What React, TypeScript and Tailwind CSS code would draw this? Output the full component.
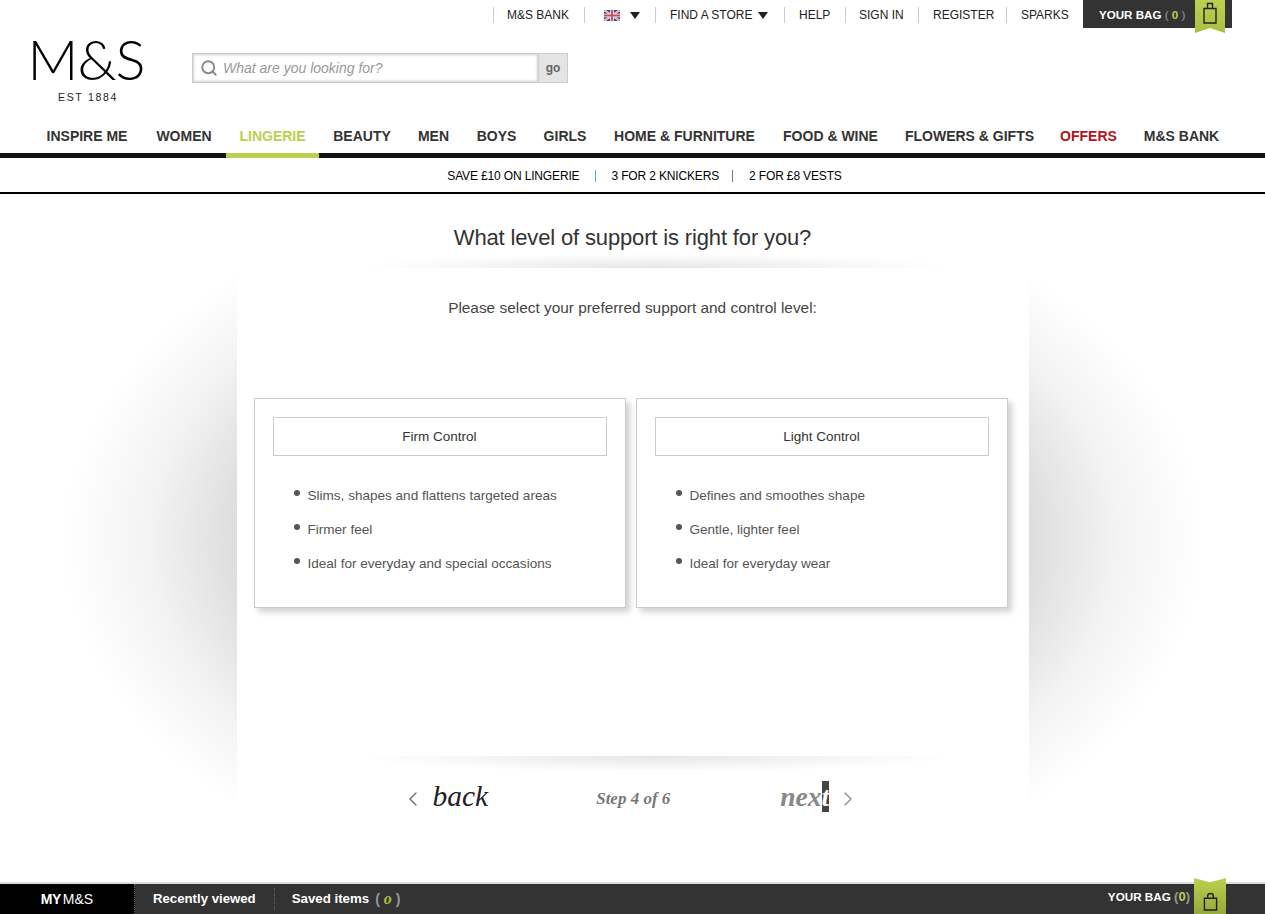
import { ChevronLeft, ChevronRight, Search } from "lucide-react";

const utilityLinks = [
    { label: "HELP", cls: "w-[61px] pl-[14px]" },
    { label: "SIGN IN", cls: "w-[73px] pl-[13px]" },
    { label: "REGISTER", cls: "w-[88px] pl-[14px]" },
    { label: "SPARKS", cls: "w-[77px] pl-[14px]" },
];

const navItems = [
    { label: "INSPIRE ME", cls: "w-[110px] text-[#333]" },
    { label: "WOMEN", cls: "w-[84px] text-[#333]" },
    { label: "LINGERIE", cls: "w-[93px] mr-[1px] text-[#bcd04f] border-b-[5px] border-[#bcd04f]" },
    { label: "BEAUTY", cls: "w-[84px] text-[#333]" },
    { label: "MEN", cls: "w-[59px] text-[#333]" },
    { label: "BOYS", cls: "w-[67px] text-[#333]" },
    { label: "GIRLS", cls: "w-[70px] text-[#333]" },
    { label: "HOME & FURNITURE", cls: "w-[169px] text-[#333]" },
    { label: "FOOD & WINE", cls: "w-[123px] text-[#333]" },
    { label: "FLOWERS & GIFTS", cls: "w-[155px] text-[#333]" },
    { label: "OFFERS", cls: "w-[83px] text-[#b5121b]" },
    { label: "M&S BANK", cls: "w-[103px] text-[#333]" },
];

const cards = [
    { title: "Firm Control", points: ["Slims, shapes and flattens targeted areas", "Firmer feel", "Ideal for everyday and special occasions"] },
    { title: "Light Control", points: ["Defines and smoothes shape", "Gentle, lighter feel", "Ideal for everyday wear"] },
];

function TopBagIcon() {
    return (
        <svg viewBox="0 0 14 22" fill="none" stroke="currentColor" strokeWidth="1.400" className="w-[14px] h-[22px]">
            <path d="M1 6.500h12v14.500H1z" />
            <path d="M4.500 6.500V1.500h5v5" />
        </svg>
    );
}

function BottomBagIcon() {
    return (
        <svg viewBox="0 0 16 20" fill="none" stroke="currentColor" strokeWidth="1.500" className="w-[15px] h-[20px]">
            <path d="M1.500 6h13v12.500h-13z" />
            <path d="M5 6V3.500C5 2 6.200 1 8 1s3 1 3 2.500V6" />
        </svg>
    );
}

function UkFlag() {
    return (
        <svg viewBox="0 0 16 11" className="w-4 h-[11px]">
            <rect width="16" height="11" fill="#3b4a8c" />
            <path d="M0 0l16 11M16 0L0 11" stroke="#fff" strokeWidth="2" />
            <path d="M0 0l16 11M16 0L0 11" stroke="#c8475a" strokeWidth="0.7" />
            <path d="M8 0v11M0 5.500h16" stroke="#fff" strokeWidth="3.500" />
            <path d="M8 0v11M0 5.500h16" stroke="#c8475a" strokeWidth="1.800" />
        </svg>
    );
}

function Caret() {
    return <span className="ml-[6px] w-0 h-0 border-x-[5px] border-x-transparent border-t-[7px] border-t-[#222]" />;
}

export default function App() {
    return (
        <div className="flex flex-col h-screen w-full overflow-hidden bg-white font-['Liberation_Sans',sans-serif] text-[#222]">

            {/* Utility bar */}
            <div className="flex justify-end items-start h-[28px] pr-[33px] text-[12px] text-[#222]">
                <div className="flex items-center h-[16px] mt-[7px]">
                    <a className="w-[91px] pl-[13px] border-l border-[#ccc] leading-[16px]">M&amp;S BANK</a>
                    <a className="flex items-center w-[71px] pl-[19px] border-l border-[#ccc] h-[16px]"><UkFlag /><span className="ml-[4px]" /><Caret /></a>
                    <a className="flex items-center w-[129px] pl-[14px] border-l border-[#ccc] h-[16px] whitespace-nowrap">FIND A STORE<Caret /></a>
                    {utilityLinks.map((link) => (
                        <a key={link.label} className={`${link.cls} border-l border-[#ccc] leading-[16px]`}>{link.label}</a>
                    ))}
                </div>
                <div className="flex items-start h-[28px] w-[149px] bg-[#333] text-white">
                    <span className="mt-[6px] ml-[16px] w-[96px] text-[11.600px] font-bold whitespace-nowrap">YOUR BAG <span className="text-[#999] font-normal">( <span className="text-[#bcd04f] font-bold">0</span> )</span></span>
                    <div className="flex justify-center pt-[2px] w-[30px] h-[33px] bg-[linear-gradient(#bcd04f,#a9bf45)] text-[#222] [clip-path:polygon(0_0,100%_0,100%_100%,50%_85%,0_100%)]">
                        <TopBagIcon />
                    </div>
                </div>
            </div>

            {/* Logo and search */}
            <div className="flex items-start h-[92px]">
                <div className="flex flex-col items-center w-[112px] ml-[30px] mt-[1px]">
                    <span className="font-['Lato',sans-serif] font-light text-[56px] leading-[60px] tracking-[-1px] text-black whitespace-nowrap">M&amp;S</span>
                    <span className="mt-[2px] ml-[4px] text-[10.500px] leading-[12px] tracking-[1.700px] text-[#222]">EST 1884</span>
                </div>
                <div className="flex ml-[50px] mt-[25px] w-[376px] h-[30px] border border-[#ccc]">
                    <div className="flex flex-1 items-center pl-[6px] border border-[#ddd] shadow-[inset_0_0_3px_rgba(0,0,0,0.15)]">
                        <Search className="w-[18px] h-[18px] text-[#888]" strokeWidth={2.500} />
                        <input readOnly placeholder="What are you looking for?" className="ml-[5px] flex-1 text-[14px] italic outline-none placeholder:text-[#999]" />
                    </div>
                    <div className="flex items-center justify-center w-[29px] bg-[#e4e4e4] border-l border-[#ccc] text-[12px] font-bold text-[#666]">go</div>
                </div>
            </div>

            {/* Main nav */}
            <nav className="flex h-[38px] pl-[32px] border-b-[5px] border-[#111]">
                {navItems.map((item) => (
                    <a key={item.label} className={`${item.cls} h-[38px] pt-[6px] text-center text-[14px] font-bold whitespace-nowrap`}>
                        {item.label}
                    </a>
                ))}
            </nav>

            {/* Sub nav */}
            <div className="flex justify-center items-center h-[36px] pt-[2px] pl-[24px] border-b-2 border-black text-[12px] tracking-[-0.150px] text-black">
                <span>SAVE £10 ON LINGERIE</span>
                <span className="ml-[16px] mr-[15px] h-[12px] border-l border-[#5ba3d9]" />
                <span>3 FOR 2 KNICKERS</span>
                <span className="ml-[13px] mr-[16px] h-[12px] border-l border-[#7a7a50]" />
                <span>2 FOR £8 VESTS</span>
            </div>

            {/* Content */}
            <main className="relative flex-1 flex flex-col items-center overflow-hidden">
                {/* soft glow behind the panel, the white heading block and panel cover its middle */}
                <div className="absolute left-[63px] top-[-24px] w-[1140px] h-[740px] bg-[radial-gradient(closest-side,#d0d0d0_50%,#dedede_70%,#f3f3f3_85%,rgba(255,255,255,0)_100%)]" />

                <div className="relative flex flex-col items-center w-full h-[74px] bg-white">
                    <h1 className="mt-[30px] text-[22px] leading-[28px] tracking-[-0.150px] text-[#333]">What level of support is right for you?</h1>
                    <div className="mt-[2px] ml-[46px] w-[590px] h-[14px] bg-[radial-gradient(ellipse_farthest-side_at_50%_100%,#e6e6e6,rgba(255,255,255,0))]" />
                </div>

                <div className="relative flex flex-col items-center w-[792px] h-[616px] bg-white">
                    <p className="mt-[30px] text-[15.400px] leading-[20px] text-[#444]">Please select your preferred support and control level:</p>

                    <div className="flex gap-[10px] mt-[80px] self-start ml-[17px]">
                        {cards.map((card) => (
                            <div key={card.title} className="w-[372px] h-[210px] px-[18px] pt-[18px] bg-white border border-[#ccc] shadow-[4px_4px_6px_rgba(0,0,0,0.18)]">
                                <div className="flex items-center justify-center h-[39px] pt-[1px] border border-[#ccc] text-[13.500px] text-[#333]">{card.title}</div>
                                <ul className="mt-[30px] ml-[21px] flex flex-col gap-[14px]">
                                    {card.points.map((point) => (
                                        <li key={point} className="flex text-[13.560px] leading-[20px] text-[#555]">
                                            <span className="mt-[4px] mr-[8px] w-[6px] h-[6px] rounded-full bg-[#555]" />
                                            {point}
                                        </li>
                                    ))}
                                </ul>
                            </div>
                        ))}
                    </div>

                    <div className="mt-[148px] ml-[46px] w-[590px] h-[16px] bg-[radial-gradient(ellipse_farthest-side_at_50%_0%,#e6e6e6,rgba(255,255,255,0))]" />

                    <div className="flex items-center h-[52px] mt-[1px] w-full font-['Liberation_Serif',serif] italic">
                        <ChevronLeft className="ml-[164px] w-[24px] h-[24px] text-[#666]" strokeWidth={1.250} />
                        <span className="ml-[8px] mb-[6px] text-[29.500px] leading-[40px] text-[#222]">back</span>
                        <span className="ml-[108px] text-[17px] font-bold text-[#777]">Step 4 of 6</span>
                        <span className="ml-[110px] mb-[6px] text-[27.500px] font-bold leading-[29px] text-[#888]">nex<span className="bg-[#444] text-white">t</span></span>
                        <ChevronRight className="ml-[7px] w-[24px] h-[24px] text-[#888]" strokeWidth={1.250} />
                    </div>
                </div>
            </main>

            {/* Bottom bar */}
            <footer className="relative flex items-center h-[32px] border-t-2 border-[#ddd] bg-[#333] text-white">
                <div className="flex items-center justify-center w-[135px] h-[30px] bg-black border-r border-dotted border-[#666] text-[14px]">
                    <span className="font-bold tracking-[-0.500px]">MY</span><span className="ml-[2px]">M&amp;S</span>
                </div>
                <span className="ml-[18px] text-[13.200px] font-bold">Recently viewed</span>
                <span className="ml-[18px] h-[22px] border-l border-dotted border-[#666]" />
                <span className="ml-[17px] text-[13.300px] font-bold">Saved items</span>
                <span className="ml-[6px] text-[14px] font-bold text-[#999]">( <span className="font-['Liberation_Serif',serif] italic text-[16px] text-[#a9c43c]">o</span> )</span>
                <span className="ml-auto mb-[5px] text-[11.700px] font-bold whitespace-nowrap">YOUR BAG <span className="text-[13px] text-[#999]">(<span className="text-[#bcd04f]">0</span>)</span></span>
                <div className="absolute right-[39px] bottom-0 flex justify-center items-end pb-[2px] w-[32px] h-[36px] bg-[linear-gradient(#bcd04f,#95a93c)] text-[#222] [clip-path:polygon(0_0,50%_12%,100%_0,100%_100%,0_100%)]">
                    <BottomBagIcon />
                </div>
                <span className="w-[75px]" />
            </footer>
        </div>
    );
}
